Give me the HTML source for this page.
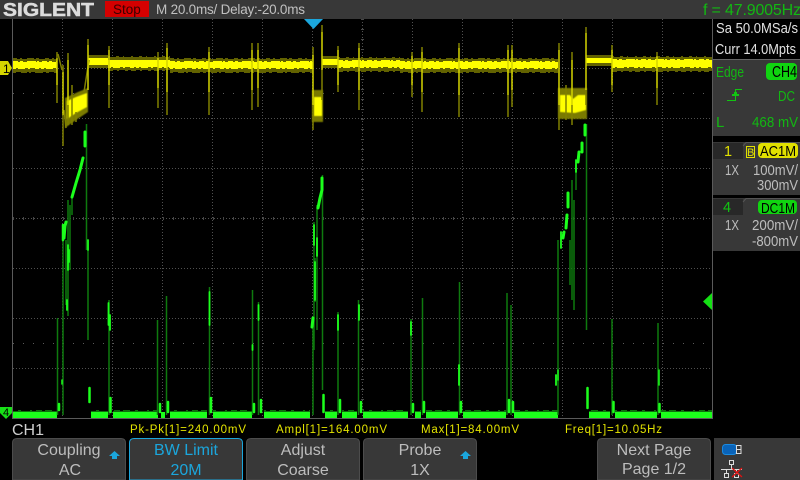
<!DOCTYPE html>
<html><head><meta charset="utf-8"><style>
html,body{margin:0;padding:0;background:#000;width:800px;height:480px;overflow:hidden}
svg{display:block}
text{font-family:"Liberation Sans",sans-serif}
</style></head><body>
<svg width="800" height="480" viewBox="0 0 800 480" xmlns="http://www.w3.org/2000/svg">
<defs><filter id="b" x="-30%" y="-30%" width="160%" height="160%"><feGaussianBlur stdDeviation="0.6"/></filter></defs>
<rect width="800" height="480" fill="#000"/>
<rect width="800" height="19" fill="#383838"/>
<!-- grid -->
<g fill="none" stroke="#505050" stroke-width="1" stroke-dasharray="1 2" shape-rendering="crispEdges">
<path d="M62.5 19V418M112.5 19V418M162.5 19V418M212.5 19V418M262.5 19V418M312.5 19V418M362.5 19V418M412.5 19V418M462.5 19V418M512.5 19V418M562.5 19V418M612.5 19V418M662.5 19V418"/>
<path d="M13 68.5H712M13 118.5H712M13 168.5H712M13 218.5H712M13 268.5H712M13 318.5H712M13 368.5H712"/>
<path d="M13 93.5H712M13 343.5H712" stroke-dasharray="1 9" stroke="#5a5a5a"/>
<path d="M13 218.5H712" stroke-width="3" stroke-dasharray="1 9" stroke="#484848"/>
<path d="M362.5 19V418" stroke-width="3" stroke-dasharray="1 9" stroke="#484848"/>
</g>
<path d="M12.5 19V418.5H712.5V19" fill="none" stroke="#5a5a5a" shape-rendering="crispEdges"/>

<!-- yellow band -->
<g shape-rendering="crispEdges">
<path fill="#626200" d="M13 59H57V72H13ZM88 55H108V68H88ZM108 57H170V70H108ZM170 59H313V72H170ZM322 56H338V68H322ZM338 58H400V71H338ZM400 59H558V72H400ZM586 55H612V66H586ZM612 57H712V71H612Z"/>
<g fill="none" stroke="#626200">
<path stroke-dasharray="4 3 2 5 7 2 3 6" d="M13 58.5H57M170 58.5H313M400 58.5H558"/>
<path stroke-dasharray="3 5 6 2 2 4 8 3" d="M13 72.5H57M170 72.5H313M400 72.5H558"/>
<path stroke-dasharray="2 6 3 4 1 7" d="M108 56.5H170M338 57.500H400M612 56.500H712"/>
<path stroke-dasharray="5 4 2 6 3 3" d="M108 70.500H170M338 71.500H400M612 71.500H712"/>
</g>
<path fill="#ffff00" d="M13 62H57V68H13ZM88 58H108V65H88ZM108 60H170V67H108ZM170 62H313V68H170ZM322 59H338V65H322ZM338 61H400V67H338ZM400 62H558V68H400ZM586 58H612V63H586ZM612 60H712V67H612Z"/>
<g fill="none" stroke="#ffff00">
<path stroke-dasharray="5 2 3 4 9 1 2 3" d="M13 61.500H57M170 61.500H313M400 61.500H558M338 60.500H400M612 59.500H712"/>
<path stroke-dasharray="3 2 7 3 2 5 4 2" d="M13 68.500H57M170 68.500H313M400 68.500H558M338 67.500H400M612 67.500H712M108 67.500H170"/>
</g>
</g>
<!-- yellow blobs -->
<g filter="url(#b)">
<path fill="#7a7a00" d="M65 98L78 92L88 88V112L76 120L65 128ZM312 90H323V122H312ZM558 88H587V119H558Z"/>
</g>
<g filter="url(#b)">
<path fill="#ffff00" d="M67 101L76 97L87 93V107L76 113L67 119ZM314 97H322V116H314ZM560 95H570L573 99L578 95H586V110L575 113L560 112Z"/>
</g>
<!-- yellow spikes dim -->
<g fill="none" stroke="#808000" stroke-width="1.500">
<path d="M57 52V103M63 65V146M68 53V125M72 85V125M88 39V90M109 46V108M158 52V108M167 43V115M209 47V115M252 43V110M258 43V107M313 47V130M322 25V100M338 46V92M359 43V110M412 52V97M422 47V112M459 43V117M508 45V117M512 45V107M559 43V130M572 52V125M566 85V120M586 27V105M612 45V92M657 52V105"/>
<path d="M58 54L62 70M84 92L89 60M64 110L66 128M76 112V122"/>
</g>
<!-- yellow spikes bright -->
<g fill="none" stroke="#ffff00" stroke-width="1">
<path d="M57 58V85M63 72V115M68 60V105M88 45V90M109 50V85M158 58V88M167 48V92M209 52V92M252 50V90M258 50V88M313 55V105M322 32V70M338 50V85M359 48V90M412 56V85M422 52V92M459 48V95M508 50V95M512 50V90M559 50V105M572 60V105M586 33V90M612 50V85M657 56V88"/>
</g>

<!-- green baseline -->
<g shape-rendering="crispEdges">
<path fill="#0d6e0d" d="M13 410H57V412H13ZM91 410H108V412H91ZM113 410H158V412H113ZM170 410H207V412H170ZM213 410H252V412H213ZM264 410H310V412H264ZM325 410H337V412H325ZM342 410H357V412H342ZM363 410H408V412H363ZM415 410H421V412H415ZM426 410H458V412H426ZM463 410H506V412H463ZM514 410H558V412H514ZM589 410H610V412H589ZM615 410H657V412H615ZM661 410H712V412H661Z"/>
<path fill="none" stroke="#000" stroke-width="1" stroke-dasharray="5 3 9 2 4 6 3 7" d="M13 410.500H712"/>
<path fill="#1cff1c" d="M13 412H57V418H13ZM91 412H108V418H91ZM113 412H158V418H113ZM170 412H207V418H170ZM213 412H252V418H213ZM264 412H310V418H264ZM325 412H337V418H325ZM342 412H357V418H342ZM363 412H408V418H363ZM415 412H421V418H415ZM426 412H458V418H426ZM463 412H506V418H463ZM514 412H558V418H514ZM589 412H610V418H589ZM615 412H657V418H615ZM661 412H712V418H661Z"/>
<path fill="#1cff1c" d="M161 412H165V418H161Z"/>
</g>
<!-- green spikes dim -->
<g fill="none" stroke="#0e7a0e" stroke-width="1.500">
<path d="M57.500 318V415M63 230V415M86.500 124V250M88 250V340M109 300V415M157.500 320V415M166.500 296V415M209.500 287V415M252.500 290V415M258.500 302V415M313 328V415M322.500 175V390M338 312V415M358.500 300V415M411 319V415M422.500 298V415M459.500 282V415M507 293V415M511 305V415M558 240V415M586.500 124V330M612 319V415M658 323V415"/>
<path d="M68 200V316M66 240V305M70 205V270M72 195V215M314 222V350M317 205V330M315 258V302M576 165V190M572 180V300M574 200V310M570 240V285"/>
</g>
<!-- green bright -->
<g fill="none" stroke="#1cff1c" stroke-linecap="round">
<path stroke-width="3" d="M64 238L65 226L66 222M72 197L74 190L76 183L80 170L83 158M85 132V146"/>
<path stroke-width="1.800" d="M68 245V270M67 300V310M69 250V262M88 240V250M108.500 303V325M110 315V330M209.500 292V325M252.500 345V350M258.500 305V320M314 225V245M315 262V300M317 238V256M359 305V320M338 315V330M411 322V335M459 365V385M556 375V385M576 160V172M561 232V248"/>
<path stroke-width="3" d="M312 327L313 318M318 208L320 198L322 190V178M563 238L564 232M566 228L567 215M568 207V193M578 162L579 152M582 152V143M585 135V125"/>
<path stroke-width="2.500" d="M63 225V240M89.500 388V402M59 404V410M110.500 398V412M160 404V412M168 402V412M211 398V412M254 404V412M261 400V412M323.500 395V412M340 400V412M361 402V412M413 404V412M424 402V412M461 402V412M509 400V412M513 402V412M587.500 388V408M613.500 402V412M659.500 404V412"/>
<path stroke-width="1.500" d="M62 380V384M558 370V380M659 370V385"/>
</g>

<!-- markers -->
<path d="M0 61H8L12 68L8 75H0Z" fill="#d6d600"/>
<text x="3" y="73" font-size="12" fill="#000">1</text>
<path d="M0 407H12V413L6 419L0 413Z" fill="#18e018"/>
<text x="3" y="416" font-size="11" fill="#000">4</text>
<path d="M703 301.500L712 293V310Z" fill="#14e014"/>
<path d="M304 19H323L313.500 29Z" fill="#1ba6dc"/>

<!-- top bar -->
<text x="3" y="16" font-size="18.500" font-weight="bold" fill="#dcdcdc" stroke="#dcdcdc" stroke-width=".5" textLength="91" lengthAdjust="spacingAndGlyphs">SIGLENT</text>
<rect x="105" y="1" width="44" height="16" fill="#d40000"/>
<text x="113" y="14" font-size="13.500" fill="#3a0000">Stop</text>
<text x="156" y="14" font-size="13.500" fill="#c0c0c0" textLength="149" lengthAdjust="spacing">M 20.0ms/ Delay:-20.0ms</text>
<text x="703" y="15" font-size="16" fill="#12b812" textLength="98">f = 47.9005Hz</text>

<!-- right panel -->
<rect x="712" y="19" width="1" height="231" fill="#5a5a5a"/>
<rect x="713" y="60" width="87" height="76" fill="#383838"/>
<rect x="713" y="59" width="87" height="1" fill="#666"/>
<text x="716" y="33" font-size="14.500" fill="#e0e0e0" textLength="82" lengthAdjust="spacingAndGlyphs">Sa 50.0MSa/s</text>
<text x="715" y="54" font-size="14.500" fill="#e0e0e0" textLength="81" lengthAdjust="spacingAndGlyphs">Curr 14.0Mpts</text>
<text x="716" y="77" font-size="15" fill="#12b812" textLength="28" lengthAdjust="spacingAndGlyphs">Edge</text>
<rect x="766" y="63" width="31" height="17" rx="4" fill="#10d410"/>
<text x="772" y="77" font-size="15.500" fill="#000" textLength="25" lengthAdjust="spacingAndGlyphs">CH4</text>
<path d="M727 100.500H735.500V89.500H742" fill="none" stroke="#12c412"/>
<path d="M732 94H739V96H732ZM734 92H737V94H734Z" fill="#12c412"/>
<text x="778" y="101" font-size="15" fill="#12b812" textLength="17" lengthAdjust="spacingAndGlyphs">DC</text>
<text x="716" y="127" font-size="15" fill="#12b812">L</text>
<text x="752" y="127" font-size="15" fill="#12b812" textLength="46" lengthAdjust="spacingAndGlyphs">468 mV</text>

<rect x="713" y="142" width="87" height="53" fill="#383838"/>
<rect x="713" y="143" width="30" height="16" fill="#282828"/>
<path d="M743 146L746 142.500H800" fill="none" stroke="#555"/>
<text x="724" y="156" font-size="14.500" fill="#e0e000">1</text>
<rect x="746.500" y="146.500" width="8" height="11" fill="#383838" stroke="#e0e000"/>
<text x="747" y="156" font-size="11" fill="#e0e000">B</text>
<rect x="758" y="143" width="40" height="15" rx="4" fill="#e0e000"/>
<text x="760" y="156" font-size="15" fill="#000" textLength="36" lengthAdjust="spacingAndGlyphs">AC1M</text>
<text x="725" y="175" font-size="15" fill="#bdbdbd" textLength="14" lengthAdjust="spacingAndGlyphs">1X</text>
<text x="753" y="175" font-size="15" fill="#bdbdbd" textLength="45" lengthAdjust="spacingAndGlyphs">100mV/</text>
<text x="757" y="190" font-size="15" fill="#bdbdbd" textLength="41" lengthAdjust="spacingAndGlyphs">300mV</text>

<rect x="713" y="198" width="87" height="53" fill="#383838"/>
<rect x="713" y="199" width="30" height="16" fill="#282828"/>
<path d="M743 202L746 198.500H800" fill="none" stroke="#555"/>
<text x="723" y="212" font-size="14.500" fill="#12c412">4</text>
<rect x="758" y="200" width="39" height="14" rx="4" fill="#10d410"/>
<text x="761" y="213" font-size="15" fill="#000" textLength="34" lengthAdjust="spacingAndGlyphs">DC1M</text>
<text x="725" y="230" font-size="15" fill="#bdbdbd" textLength="14" lengthAdjust="spacingAndGlyphs">1X</text>
<text x="752" y="230" font-size="15" fill="#bdbdbd" textLength="46" lengthAdjust="spacingAndGlyphs">200mV/</text>
<text x="752" y="246" font-size="15" fill="#bdbdbd" textLength="46" lengthAdjust="spacingAndGlyphs">-800mV</text>

<!-- measurements -->
<text x="12" y="435" font-size="16" fill="#d0d0d0">CH1</text>
<g font-size="11.500" fill="#e4e400">
<text x="130" y="433" textLength="116">Pk-Pk[1]=240.00mV</text>
<text x="276" y="433" textLength="111">Ampl[1]=164.00mV</text>
<text x="421" y="433" textLength="98">Max[1]=84.00mV</text>
<text x="565" y="433" textLength="97">Freq[1]=10.05Hz</text>
</g>

<!-- soft buttons -->
<g fill="#383838" stroke="#4c4c4c">
<path d="M12.500 480V443Q12.500 438.500 17 438.500H121Q125.500 438.500 125.500 443V480Z"/>
<path d="M246.500 480V443Q246.500 438.500 251 438.500H355Q359.500 438.500 359.500 443V480Z"/>
<path d="M363.500 480V443Q363.500 438.500 368 438.500H472Q476.500 438.500 476.500 443V480Z"/>
<path d="M597.500 480V443Q597.500 438.500 602 438.500H706Q710.500 438.500 710.500 443V480Z"/>
</g>
<path d="M129.500 480V443Q129.500 438.500 134 438.500H238Q242.500 438.500 242.500 443V480Z" fill="#383838" stroke="#1ba6dc"/>
<rect x="714" y="438" width="86" height="42" fill="#383838"/>
<g font-size="16" fill="#bdbdbd" text-anchor="middle">
<text x="69" y="455">Coupling</text>
<text x="70" y="475">AC</text>
<text x="186" y="455" fill="#1ba6dc">BW Limit</text>
<text x="186" y="475" fill="#1ba6dc">20M</text>
<text x="303" y="455">Adjust</text>
<text x="303" y="475">Coarse</text>
<text x="420" y="455">Probe</text>
<text x="420" y="475">1X</text>
<text x="654" y="455">Next Page</text>
<text x="654" y="474">Page 1/2</text>
</g>
<path d="M114.500 451L120 456H117V459H112V456H109Z" fill="#1ba6dc"/>
<path d="M465.500 451L471 456H468V459H463V456H460Z" fill="#1ba6dc"/>

<!-- usb icon -->
<rect x="722.500" y="444.500" width="14" height="10" rx="3" fill="#0a63b8" stroke="#1a8ae0"/>
<rect x="736.500" y="445.500" width="4.500" height="8" fill="#383838" stroke="#ddd"/>
<path d="M737 449.500H741" stroke="#ddd"/>
<!-- network icon -->
<g fill="none" stroke="#ddd" shape-rendering="crispEdges">
<rect x="729.500" y="460.500" width="4" height="4"/>
<path d="M731.500 465V469M721 469.500H742M726.500 470V473M736.500 470V473"/>
<rect x="724.500" y="473.500" width="4" height="4"/>
<rect x="734.500" y="473.500" width="4" height="4"/>
</g>
<path d="M732 468L742 477M742 468L732 477" stroke="#e01010" stroke-width="1.300"/>
</svg>
</body></html>
